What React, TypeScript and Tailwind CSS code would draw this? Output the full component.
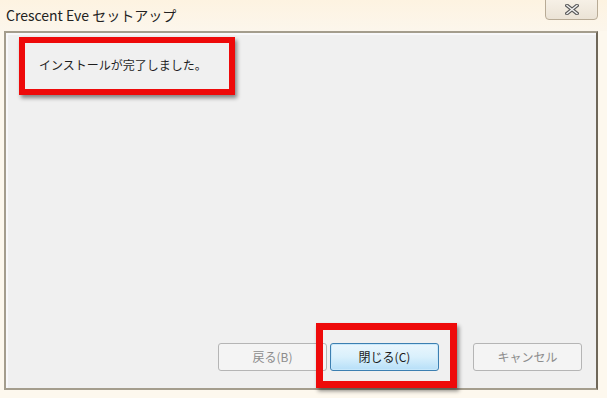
import React from "react";

const jp = "font-['Segoe_UI','Noto_Sans_CJK_JP',sans-serif]";

const CloseGlyph = () => (
  <svg width="14" height="11" viewBox="0 0 14 11">
    <path d="M2 1.5 L12 9.5 M12 1.5 L2 9.5" stroke="#5a5a5a" strokeWidth="3.6" strokeLinecap="square" />
    <path d="M2 1.5 L12 9.5 M12 1.5 L2 9.5" stroke="#f4f4f4" strokeWidth="1.4" strokeLinecap="square" />
  </svg>
);

const Button = ({ label, primary, disabled }: { label: string; primary?: boolean; disabled?: boolean }) => (
  <button
    className={`h-[28px] w-[109px] rounded-[3px] border text-[12px] ${jp} ${
      primary
        ? "border-[#3c7fb1] bg-gradient-to-b from-[#eaf6fd] via-[#d9f0fc] to-[#b6dff8] text-[#1a1a1a] shadow-[inset_0_0_0_1px_#c8e8fb]"
        : "border-[#b5b5b5] bg-[#f4f4f4] text-[#8c8c8c]"
    }`}
    disabled={disabled}
  >
    {label}
  </button>
);

export default function App() {
  return (
    <div className={`relative w-[607px] h-[398px] overflow-hidden bg-[#fdf8ee] ${jp}`}>
      {/* title bar */}
      <div className="flex h-[31px] items-start justify-between bg-gradient-to-b from-[#fdf3e1] to-[#fcf6ec]">
        <div className="pl-[6px] pt-[5px] text-[14px] text-[#222]">Crescent Eve セットアップ</div>
        <div className="mr-[9px] -mt-[2px] flex h-[22px] w-[53px] items-center justify-center rounded-b-[4px] border border-[#b8ab96] bg-gradient-to-b from-[#f7f1e7] to-[#ebe3d6]">
          <CloseGlyph />
        </div>
      </div>

      {/* panel */}
      <div className="mx-[4px] flex h-[359px] w-[594px] flex-col border-2 border-[#a49d8d] border-r-[#6f6759] bg-[#f0f0f0] shadow-[inset_2px_2px_0_#f8f8fa]">
        <div className="pl-[33px] pt-[23px] text-[12px] text-[#1e1e1e]">インストールが完了しました。</div>
        <div className="mt-auto flex justify-end gap-[3px] pb-[17px] pr-[14px]">
          <Button label="戻る(B)" disabled />
          <Button label="閉じる(C)" primary />
          <div className="w-[28px]" />
          <Button label="キャンセル" disabled />
        </div>
      </div>

      {/* annotations */}
      <div className="absolute left-[19px] top-[37px] h-[58px] w-[216px] border-[6px] border-[#ee0a0a] shadow-[2px_3px_4px_rgba(0,0,0,0.45)]" />
      <div className="absolute left-[316px] top-[323px] h-[65px] w-[141px] border-[7px] border-[#ee0a0a] shadow-[2px_3px_4px_rgba(0,0,0,0.45)]" />
    </div>
  );
}
